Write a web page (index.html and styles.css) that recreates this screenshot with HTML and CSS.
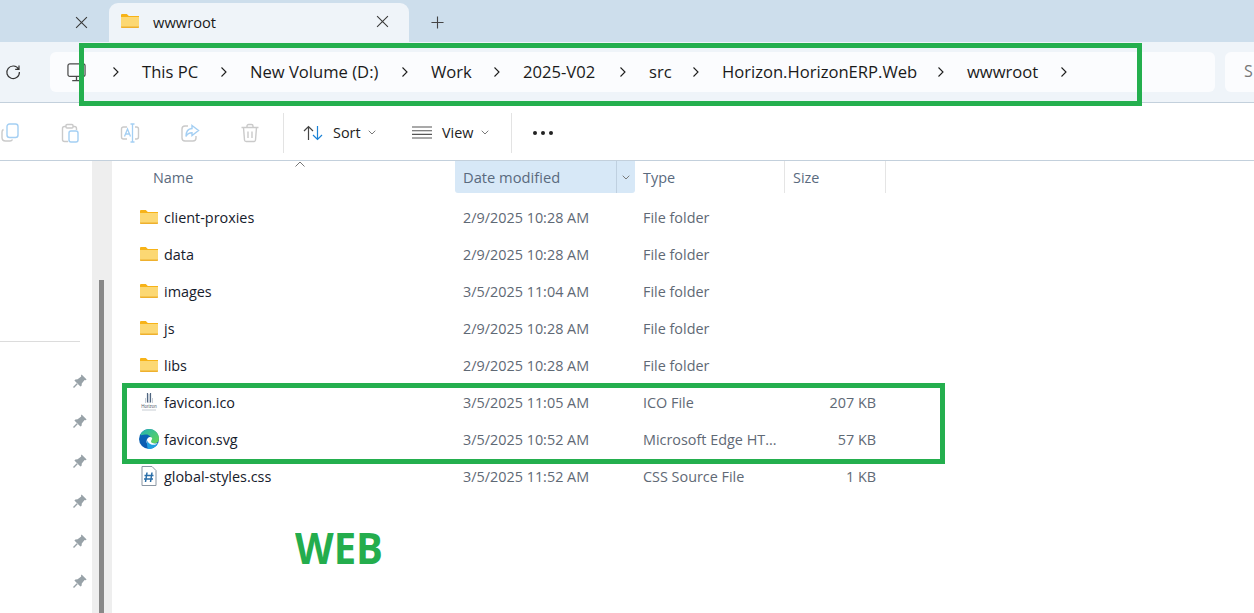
FILE: index.html
```html
<!DOCTYPE html>
<html lang="en">
<head>
<meta charset="utf-8">
<title>wwwroot</title>
<link rel="stylesheet" href="styles.css">
</head>
<body>
<svg class="defs" width="0" height="0">
  <defs>
    <symbol id="folder" viewBox="0 0 18 14">
      <path d="M0 1.2C0 .5.5 0 1.2 0h4.6l2 2H18v2H0z" fill="#f7b318"/>
      <path d="M0 3h18v10c0 .6-.4 1-1 1H1c-.6 0-1-.4-1-1z" fill="#fcd873"/>
      <path d="M0 12.6h18v.5c0 .5-.4.9-1 .9H1c-.6 0-1-.4-1-.9z" fill="#eeb02e"/>
    </symbol>
    <symbol id="chev" viewBox="0 0 8 12">
      <path d="M1.5 1.500 6 6l-4.500 4.500" fill="none" stroke="#1c1c1c" stroke-width="1.100"/>
    </symbol>
    <symbol id="pin" viewBox="0 0 14 14">
      <path d="M8.6.4 13.6 5.4 12.6 6.2 11.6 6 8.8 9.6 8.6 11.8 7.4 12.6 1.4 6.6 2.4 5.4 4.6 5.2 8.2 2.4 8 1.4z" fill="#98a2a8"/>
      <path d="M4.2 9.8.5 13.5" stroke="#98a2a8" stroke-width="1.4"/>
    </symbol>
    <symbol id="close" viewBox="0 0 12 12">
      <path d="M1 1l10 10M11 1 1 11" stroke="#3a3a3a" stroke-width="1" fill="none"/>
    </symbol>
    <symbol id="small-chev" viewBox="0 0 8 5">
      <path d="M.7.7 4 4 7.3.7" stroke="#7a7a7a" stroke-width="1" fill="none"/>
    </symbol>
    <linearGradient id="edge-a" x1="0" y1="0" x2="1" y2="1">
      <stop offset="0" stop-color="#22b3b8"/>
      <stop offset="1" stop-color="#66d84f"/>
    </linearGradient>
    <linearGradient id="edge-b" x1="0" y1="0" x2="0" y2="1">
      <stop offset="0" stop-color="#0a6bb8"/>
      <stop offset="1" stop-color="#0a58b0"/>
    </linearGradient>
  </defs>
</svg>

<div class="tabbar">
  <div class="tab-prev">
    <svg class="tab-x"><use href="#close"/></svg>
  </div>
  <div class="tab-active">
    <svg class="tab-folder"><use href="#folder"/></svg>
    <span class="tab-title">wwwroot</span>
    <svg class="tab-x"><use href="#close"/></svg>
  </div>
  <svg class="tab-plus" viewBox="0 0 14 14"><path d="M7 .5v13M.5 7h13" stroke="#444" stroke-width="1.2"/></svg>
</div>

<div class="addressbar">
  <svg class="refresh" viewBox="0 0 16 16"><path d="M13.6 5.2A6.3 6.3 0 1 0 14.4 8M14 1.6v3.8h-3.8" fill="none" stroke="#333" stroke-width="1.2"/></svg>
  <div class="address">
    <svg class="pc" viewBox="0 0 20 20"><rect x="1" y=".8" width="18" height="13.4" rx="2" fill="none" stroke="#4a4a4a" stroke-width="1.3"/><path d="M10 14.5v3.5M5.5 18.5h9" stroke="#4a4a4a" stroke-width="1.4"/></svg>
    <svg class="crumb-chev first"><use href="#chev"/></svg>
    <span class="crumb w-pc">This PC</span>
    <svg class="crumb-chev"><use href="#chev"/></svg>
    <span class="crumb w-vol">New Volume (D:)</span>
    <svg class="crumb-chev"><use href="#chev"/></svg>
    <span class="crumb w-work">Work</span>
    <svg class="crumb-chev"><use href="#chev"/></svg>
    <span class="crumb w-ver">2025-V02</span>
    <svg class="crumb-chev"><use href="#chev"/></svg>
    <span class="crumb w-src">src</span>
    <svg class="crumb-chev"><use href="#chev"/></svg>
    <span class="crumb w-web">Horizon.HorizonERP.Web</span>
    <svg class="crumb-chev"><use href="#chev"/></svg>
    <span class="crumb w-root">wwwroot</span>
    <svg class="crumb-chev"><use href="#chev"/></svg>
  </div>
  <div class="search"><span class="search-s">S</span></div>
</div>

<div class="toolbar">
  <div class="tool-icons">
    <svg class="tool-icon" viewBox="0 0 20 20"><rect x="7" y="1" width="11" height="13.500" rx="2.500" fill="none" stroke="#a4cff3" stroke-width="1.400"/><path d="M3.500 6.500C2.500 7 2 8 2 9v5.500C2 16.500 3.500 18 5.500 18H10c1 0 2-.5 2.500-1.500" fill="none" stroke="#cacaca" stroke-width="1.400"/></svg>
    <svg class="tool-icon" viewBox="0 0 20 20"><path d="M6 3.500H4.500C3.300 3.500 2.500 4.300 2.500 5.500v11c0 1.200.8 2 2 2H8M13 3.500h1.500c1.200 0 2 .8 2 2V7" fill="none" stroke="#cacaca" stroke-width="1.400"/><rect x="6" y="1.500" width="7" height="3.500" rx="1" fill="none" stroke="#cacaca" stroke-width="1.400"/><rect x="9" y="8" width="9" height="11" rx="2" fill="none" stroke="#a4cff3" stroke-width="1.400"/></svg>
    <svg class="tool-icon" viewBox="0 0 20 20"><path d="M7 4H3.500C2.300 4 1.500 4.800 1.500 6v8c0 1.200.8 2 2 2H7M15 4h1.500c1.200 0 2 .8 2 2v8c0 1.200-.8 2-2 2H15" fill="none" stroke="#cacaca" stroke-width="1.400"/><path d="M12.500 1v18M10.500 1h4M10.500 19h4M4.500 13.500 7.500 6l3 7.500M5.500 11h4" fill="none" stroke="#a4cff3" stroke-width="1.300"/></svg>
    <svg class="tool-icon" viewBox="0 0 20 20"><path d="M8 3H5C3.300 3 2 4.300 2 6v9c0 1.700 1.300 3 3 3h8c1.700 0 3-1.300 3-3v-2" fill="none" stroke="#cacaca" stroke-width="1.400"/><path d="M12 2.500 18.500 7.500 12 12.500V9.800C9 9.800 7.300 11 6 13.500c0-5 2.500-7.800 6-8z" fill="none" stroke="#a4cff3" stroke-width="1.400"/></svg>
    <svg class="tool-icon" viewBox="0 0 20 20"><path d="M1.500 4.500h17M7 4.500V3c0-.8.700-1.500 1.500-1.500h3c.8 0 1.500.7 1.500 1.500v1.500M3.500 4.500l1 12.500c.1 1 .9 1.500 1.700 1.500h7.600c.8 0 1.600-.5 1.700-1.500l1-12.500M8 8.500v6.500M12 8.500v6.500" fill="none" stroke="#cacaca" stroke-width="1.400"/></svg>
  </div>
  <div class="tool-sep"></div>
  <div class="tool-btn sort-btn">
    <svg class="sort-icon" viewBox="0 0 20 16"><path d="M5.500 15V1.500M1 6 5.500 1.500 10 6" fill="none" stroke="#444" stroke-width="1.200"/><path d="M14.500 1v13.500M10 10l4.500 4.500L19 10" fill="none" stroke="#1b82d6" stroke-width="1.200"/></svg>
    <span class="tool-label">Sort</span>
    <svg class="tool-chev"><use href="#small-chev"/></svg>
  </div>
  <div class="tool-btn view-btn">
    <svg class="view-icon" viewBox="0 0 20 13"><path d="M0 1h20M0 4.700h20M0 8.400h20M0 12h20" stroke="#555" stroke-width="1.100"/></svg>
    <span class="tool-label">View</span>
    <svg class="tool-chev"><use href="#small-chev"/></svg>
  </div>
  <div class="tool-sep"></div>
  <div class="dots"><i></i><i></i><i></i></div>
</div>

<div class="main">
  <aside class="sidebar">
    <div class="side-rule"></div>
    <div class="pins">
      <svg class="pin"><use href="#pin"/></svg>
      <svg class="pin"><use href="#pin"/></svg>
      <svg class="pin"><use href="#pin"/></svg>
      <svg class="pin"><use href="#pin"/></svg>
      <svg class="pin"><use href="#pin"/></svg>
      <svg class="pin"><use href="#pin"/></svg>
    </div>
  </aside>
  <div class="scrollbar"><div class="thumb"></div></div>
  <section class="files">
    <div class="head">
      <div class="hcell name-h">Name<svg class="sort-caret" viewBox="0 0 10 6"><path d="M.5 5.500 5 1l4.500 4.500" fill="none" stroke="#777" stroke-width="1"/></svg></div>
      <div class="hcell date-h"><span class="date-label">Date modified</span><span class="date-drop"><svg class="drop-chev"><use href="#small-chev"/></svg></span></div>
      <div class="hcell type-h">Type</div>
      <div class="hcell size-h">Size</div>
    </div>
    <div class="row"><div class="name"><svg class="ficon"><use href="#folder"/></svg>client-proxies</div><div class="date">2/9/2025 10:28 AM</div><div class="type">File folder</div><div class="size"></div></div>
    <div class="row"><div class="name"><svg class="ficon"><use href="#folder"/></svg>data</div><div class="date">2/9/2025 10:28 AM</div><div class="type">File folder</div><div class="size"></div></div>
    <div class="row"><div class="name"><svg class="ficon"><use href="#folder"/></svg>images</div><div class="date">3/5/2025 11:04 AM</div><div class="type">File folder</div><div class="size"></div></div>
    <div class="row"><div class="name"><svg class="ficon"><use href="#folder"/></svg>js</div><div class="date">2/9/2025 10:28 AM</div><div class="type">File folder</div><div class="size"></div></div>
    <div class="row"><div class="name"><svg class="ficon"><use href="#folder"/></svg>libs</div><div class="date">2/9/2025 10:28 AM</div><div class="type">File folder</div><div class="size"></div></div>
    <div class="row"><div class="name"><svg class="ficon tall" viewBox="0 0 20 20"><path d="M8.500 1v9.500M11.500 1v9.500" stroke="#4f6580" stroke-width="1.200"/><path d="M10 2v9" stroke="#a8b4c2" stroke-width="1"/><path d="M6.500 6v5M13.500 6v5" stroke="#c5ccd5" stroke-width="1"/><text class="ico-text" x="10" y="15.500" text-anchor="middle">Horizon</text><path d="M3 18h14" stroke="#c8cdd4" stroke-width="1"/></svg>favicon.ico</div><div class="date">3/5/2025 11:05 AM</div><div class="type">ICO File</div><div class="size">207 KB</div></div>
    <div class="row"><div class="name"><svg class="ficon tall" viewBox="0 0 20 20"><circle cx="10" cy="10" r="10" fill="url(#edge-b)"/><path d="M1 6C3 2 6.500 0 10 0c6 0 10 4.500 10 9.500 0 3.200-2.500 5-5 5-2 0-3.500-.7-3.500-2 0-.8.800-1.200.8-2.200C12.300 8 10 5.500 7.500 5.500 5 5.500 2.500 6.500 1 6z" fill="url(#edge-a)"/><path d="M7.500 12.500C7.500 9.800 9.500 8 11 8c1.800 0 2.600 1.300 2 2.300-.6 1.100-1.300 1.700-.8 2.800.6 1.300 2.800 1.700 4.800 1.300.8-.1 1.300-.2 1.800-.5-2 2.600-5.500 3.600-8.500 2.500-1.800-.7-2.800-2.400-2.800-3.900z" fill="#fff"/><path d="M9 20c4.300.3 8-1.800 10-5.500-1.800 1.200-5 1.800-7.300.8-1.700-.7-3-2.200-3.200-4-.8 3-.5 6.500.5 8.700z" fill="#1f9fe0"/></svg>favicon.svg</div><div class="date">3/5/2025 10:52 AM</div><div class="type">Microsoft Edge HT...</div><div class="size">57 KB</div></div>
    <div class="row"><div class="name"><svg class="ficon tall" viewBox="0 0 20 20"><path d="M3 .5h10l4 4v15H3z" fill="#fff" stroke="#8a96a3" stroke-width="1"/><path d="M8 6.500 6.500 16M13 6.500 11.500 16M5.500 9.500h9M5 13h9" stroke="#2a6ea8" stroke-width="1.500"/></svg>global-styles.css</div><div class="date">3/5/2025 11:52 AM</div><div class="type">CSS Source File</div><div class="size">1 KB</div></div>
    <div class="web">WEB</div>
  </section>
</div>

<div class="mark mark-path"></div>
<div class="mark mark-files"></div>
</body>
</html>
```
FILE: styles.css
```css
* { box-sizing: border-box; }
html, body { margin: 0; padding: 0; }
body {
  width: 1254px;
  height: 613px;
  overflow: hidden;
  position: relative;
  background: #fff;
  font-family: "Open Sans", "Noto Sans", sans-serif;
  color: #1a1a1a;
}
.defs { position: absolute; }

/* tabs */
.tabbar {
  height: 42px;
  background: #cddeec;
  display: flex;
  align-items: flex-end;
}
.tab-prev {
  width: 109px;
  height: 39px;
  padding: 13px 21px 0 0;
  display: flex;
  justify-content: flex-end;
}
.tab-x { width: 13px; height: 13px; flex: none; }
.tab-active {
  width: 300px;
  height: 39px;
  background: #eff4f9;
  border-radius: 9px 9px 0 0;
  display: flex;
  align-items: center;
  padding: 0 20px 2px 12px;
}
.tab-folder { width: 18px; height: 14px; flex: none; margin-top: -1px; }
.tab-title { margin-left: 14px; font-size: 14.700px; font-weight: 500; flex: 1; }
.tab-plus { width: 13px; height: 13px; margin: 0 0 13px 22px; }

/* address */
.addressbar {
  height: 61px;
  background: #eff4f9;
  border-bottom: 1px solid #c3d0dc;
  padding: 10px 0 0 5px;
  display: flex;
}
.refresh { width: 16px; height: 16px; margin-top: 12px; flex: none; }
.address {
  margin-left: 29px;
  width: 1165px;
  height: 40px;
  background: #fbfcfe;
  border-radius: 6px;
  display: flex;
  align-items: center;
  padding-left: 17px;
}
.pc { width: 19px; height: 19px; flex: none; margin-right: 26px; }
.crumb { font-size: 16.600px; white-space: nowrap; flex: none; margin-top: -2px; }
.crumb-chev { width: 8px; height: 12px; flex: none; margin: 0 22px 0 0; }
.w-pc { width: 78px; }
.w-vol { width: 151px; }
.w-work { width: 62px; }
.w-ver { width: 96px; }
.w-src { width: 43px; }
.w-web { width: 215px; }
.w-root { width: 93px; }
.search {
  margin-left: 10px;
  flex: 1;
  height: 40px;
  background: #fbfcfe;
  border-radius: 6px 0 0 6px;
  padding: 8px 0 0 19px;
}
.search-s { font-size: 16px; color: #777; }

/* toolbar */
.toolbar {
  height: 58px;
  border-bottom: 1px solid #c3d0dc;
  display: flex;
  align-items: center;
  padding-top: 2px;
}
.tool-icons {
  display: flex;
  gap: 40px;
  width: 283px;
}
.tool-icon { width: 20px; height: 20px; flex: none; }
.tool-sep { width: 1px; height: 40px; background: #e3e3e3; flex: none; }
.tool-btn { display: flex; align-items: center; flex: none; }
.sort-btn { margin-left: 19px; width: 109px; }
.view-btn { width: 99px; }
.sort-icon { width: 20px; height: 16px; flex: none; margin-right: 10px; }
.view-icon { width: 20px; height: 13px; flex: none; margin-right: 10px; }
.tool-label { font-size: 14.400px; color: #222; width: 39px; }
.sort-btn .tool-label { width: 35px; }
.tool-chev { width: 8px; height: 5px; flex: none; }
.dots { display: flex; gap: 4px; margin-left: 21px; }
.dots i { width: 4px; height: 4px; border-radius: 50%; background: #222; display: block; }

/* body */
.main { display: flex; height: 452px; }
.sidebar { width: 92px; padding-top: 180px; flex: none; }
.side-rule { width: 80px; height: 1px; background: #dcdcdc; }
.pins {
  display: flex;
  flex-direction: column;
  align-items: flex-end;
  gap: 26px;
  padding: 32px 5px 0 0;
}
.pin { width: 14px; height: 14px; flex: none; }
.scrollbar {
  width: 19px;
  background: #eeeeee;
  flex: none;
  padding: 119px 7px 0 7px;
}
.thumb { height: 100%; background: #888; }
.files {
  flex: 1;
  border-left: 1px solid #eeeeee;
  padding-left: 1px;
  position: relative;
}
.head, .row {
  display: grid;
  grid-template-columns: 342px 180px 150px 101px;
}
.head { height: 32px; }
.hcell {
  font-size: 14.400px;
  color: #5a6a7e;
  display: flex;
  align-items: center;
  border-right: 1px solid #e5e5e5;
  padding-left: 8px;
}
.name-h { padding-left: 40px; border-right: 0; position: relative; }
.sort-caret {
  position: absolute;
  left: 182px;
  top: 0;
  width: 10px;
  height: 6px;
}
.date-h {
  background: #d7e8f7;
  border: 0;
  border-radius: 0 0 3px 3px;
  padding: 0;
}
.date-label { flex: 1; padding-left: 8px; font-size: 14.700px; }
.date-drop {
  width: 19px;
  height: 100%;
  border-left: 1px solid #bfd0e0;
  display: flex;
  align-items: center;
  justify-content: center;
}
.drop-chev { width: 8px; height: 5px; }
.row { height: 37px; font-size: 14.400px; align-items: center; }
.head + .row { margin-top: 6px; }
.name { display: flex; align-items: center; padding-left: 27px; color: #16202c; }
.ficon { width: 18px; height: 14px; flex: none; margin: -2px 6px 0 0; }
.ficon.tall { width: 20px; height: 20px; margin: -2px 5px 0 -1px; }
.ico-text { font-size: 4.500px; fill: #55606e; font-family: "Liberation Sans", sans-serif; }
.date, .type { padding-left: 8px; color: #5f6975; }
.size { text-align: right; padding-right: 10px; color: #5f6975; }
.web {
  position: absolute;
  left: 183px;
  top: 361px;
  font-size: 40px;
  font-weight: 700;
  line-height: 52px;
  color: #24ad4d;
  transform: scaleY(1.080);
}

/* annotation boxes */
.mark { position: absolute; border: 5px solid #24af4e; }
.mark-path { left: 79px; top: 43px; width: 1063px; height: 63px; }
.mark-files { left: 122px; top: 383px; width: 823px; height: 81px; }
```
